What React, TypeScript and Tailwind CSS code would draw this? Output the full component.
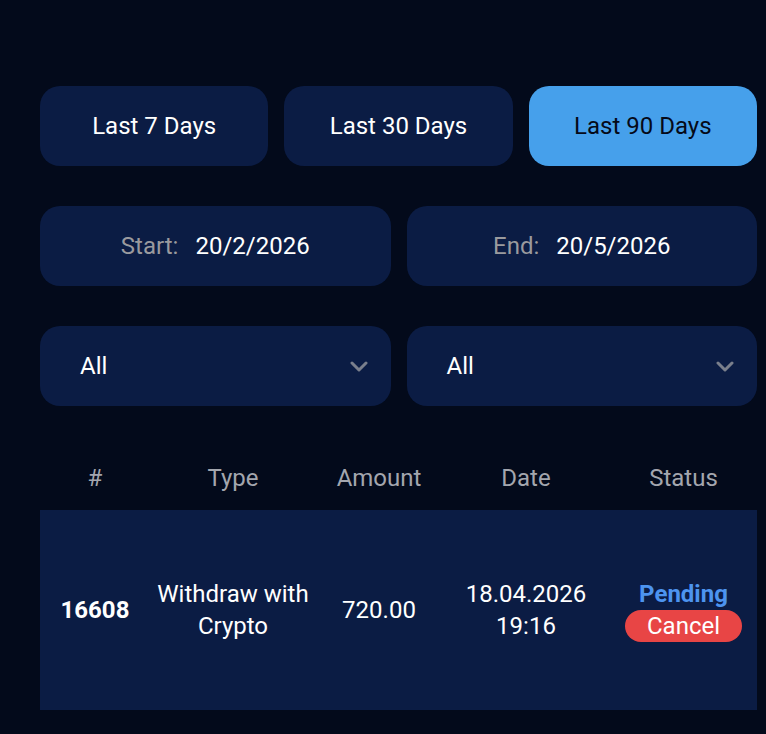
import React from "react";

const font = { fontFamily: "Roboto, 'Noto Sans', sans-serif" };

function Chevron() {
  return (
    <svg width="18" height="11" viewBox="0 0 18 11" fill="none" className="shrink-0">
      <path d="M2 2 L9 9 L16 2" stroke="#7a7f8c" strokeWidth="3" strokeLinecap="round" strokeLinejoin="round" />
    </svg>
  );
}

export default function App() {
  return (
    <div className="min-h-[734px] w-full bg-[#030a1b] text-white" style={font}>
      <div className="pl-[40px] pr-[9px] pt-[86px] flex flex-col gap-[40px]">
        <div className="grid grid-cols-3 gap-4">
          <button className="h-[80px] rounded-[20px] bg-[#0b1c44] text-[24px] text-white">Last 7 Days</button>
          <button className="h-[80px] rounded-[20px] bg-[#0b1c44] text-[24px] text-white">Last 30 Days</button>
          <button className="h-[80px] rounded-[20px] bg-[#46a0eb] text-[24px] text-[#050a18]">Last 90 Days</button>
        </div>
        <div className="grid grid-cols-2 gap-4">
          <div className="h-[80px] rounded-[20px] bg-[#0b1c44] flex items-center justify-center gap-[17px] text-[24px]">
            <span className="text-[#9a9a9e]">Start:</span>
            <span className="text-white">20/2/2026</span>
          </div>
          <div className="h-[80px] rounded-[20px] bg-[#0b1c44] flex items-center justify-center gap-[17px] text-[24px]">
            <span className="text-[#9a9a9e]">End:</span>
            <span className="text-white">20/5/2026</span>
          </div>
        </div>
        <div className="grid grid-cols-2 gap-4">
          <div className="h-[80px] rounded-[20px] bg-[#0b1c44] flex items-center justify-between pl-[40px] pr-[23px] text-[24px]">
            <span>All</span>
            <Chevron />
          </div>
          <div className="h-[80px] rounded-[20px] bg-[#0b1c44] flex items-center justify-between pl-[40px] pr-[23px] text-[24px]">
            <span>All</span>
            <Chevron />
          </div>
        </div>
        <table className="w-full border-collapse text-[24px] leading-[32px]">
          <thead>
            <tr className="h-[64px] text-[#a3a6ae]">
              <th className="font-normal w-[110px]">#</th>
              <th className="font-normal w-[166px]">Type</th>
              <th className="font-normal w-[126px]">Amount</th>
              <th className="font-normal w-[168px]">Date</th>
              <th className="font-normal">Status</th>
            </tr>
          </thead>
          <tbody>
            <tr className="h-[200px] bg-[#0b1c44] text-center">
              <td className="font-bold">16608</td>
              <td>Withdraw with<br />Crypto</td>
              <td>720.00</td>
              <td>18.04.2026<br />19:16</td>
              <td>
                <div className="flex flex-col items-center">
                  <span className="font-bold text-[#4d94ef]">Pending</span>
                  <span className="rounded-full bg-[#e84545] px-[22px] leading-[32px]">Cancel</span>
                </div>
              </td>
            </tr>
          </tbody>
        </table>
      </div>
    </div>
  );
}
